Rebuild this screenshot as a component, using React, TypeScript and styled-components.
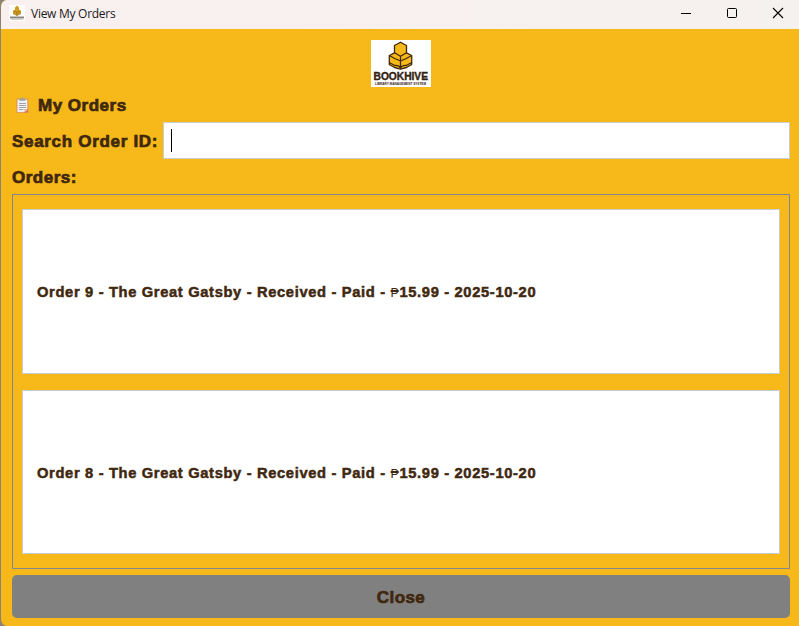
import React from "react";
import styled, { createGlobalStyle } from "styled-components";

const GlobalStyle = createGlobalStyle`
  * { box-sizing: border-box; }
  html, body { margin: 0; padding: 0; overflow: hidden; background: #8b826f; }
`;

const Window = styled.div`
  width: 799px;
  height: 626px;
  display: flex;
  flex-direction: column;
  background: #f7b919;
  border-left: 1px solid #8b826f;
  border-radius: 7px 0 0 7px;
  overflow: hidden;
  color: #40280f;
  font-family: "Liberation Sans", Arial, sans-serif;
  font-weight: 700;
`;

const TitleBar = styled.header`
  height: 29px;
  flex: none;
  display: flex;
  align-items: center;
  padding: 0 15px 3px 8px;
  background: linear-gradient(90deg, #f9f0ef, #f5f1ef);
  color: #1b1b1b;
`;

const Title = styled.span`
  margin: 1px 0 0 6px;
  font: 400 12px "Open Sans", "Noto Sans", sans-serif;
  letter-spacing: -0.27px;
  flex: 1;
`;

const Controls = styled.div`
  display: flex;
  gap: 34px;
  svg { display: block; }
`;

const Content = styled.main`
  flex: 1;
  display: flex;
  flex-direction: column;
  padding: 11px 9px 8px 11px;
`;

const LogoRow = styled.div`
  height: 47px;
  display: flex;
  justify-content: center;
  svg { display: block; overflow: visible; }
`;

const Label = styled.div<{ $spacing: number }>`
  padding-top: 2px;
  font-size: 17px;
  line-height: 20px;
  letter-spacing: ${(p) => p.$spacing}px;
  -webkit-text-stroke: 0.7px currentColor;
  white-space: pre;
`;

const HeadingRow = styled.div`
  display: flex;
  align-items: center;
  height: 20px;
  margin: 8px 0 7px;
  padding-left: 3px;
  gap: 8px;
`;

const SearchRow = styled.div`
  display: flex;
  align-items: center;
  height: 37px;
`;

const LabelCell = styled.div`
  width: 151px;
`;

const SearchBox = styled.div`
  flex: 1;
  height: 37px;
  display: flex;
  align-items: center;
  padding-left: 7px;
  background: #fff;
  border: 1px solid #ccc;
`;

const Caret = styled.span`
  width: 1px;
  height: 23px;
  background: #000;
`;

const OrdersHeading = styled.div`
  height: 21px;
  margin: 7px 0;
`;

const OrderList = styled.section`
  height: 375px;
  padding: 14px 9px;
  border: 1px solid #828790;
`;

const OrderCard = styled.article<{ $height: number }>`
  height: ${(p) => p.$height}px;
  margin-bottom: 16px;
  padding: 2px 0 0 14px;
  display: flex;
  align-items: center;
  background: #fff;
  border: 1px solid #ccc;
`;

const OrderText = styled.span`
  font-size: 14.7px;
  line-height: 18px;
  letter-spacing: 0.66px;
  -webkit-text-stroke: 0.5px currentColor;
  white-space: pre;
`;

const Peso = styled.span`
  display: inline-block;
  width: 9px;
  font-family: "Liberation Sans", sans-serif;
  font-size: 12.5px;
  font-weight: 400;
  letter-spacing: 0;
  -webkit-text-stroke: 0;
`;

const CloseButton = styled.button`
  height: 43px;
  margin-top: 6px;
  padding: 0;
  display: flex;
  align-items: center;
  justify-content: center;
  border: 0;
  border-radius: 5px;
  background: #808080;
  color: inherit;
  font-family: inherit;
  font-weight: 700;
`;

const LogoMark = () => (
  <g stroke="#40280f" strokeWidth="1.3" strokeLinejoin="round" fill="#f7b919">
    <path d="m18.300 15.500 5.400-2.700h11.600l5.400 2.700v9l-5.200 3-6 1.700-6-1.700-5.200-3z" />
    <path d="m23.500 5.500 6-3.300 6 3.300v7.300l-6 3.500-6-3.500z" />
    <path d="m18.300 15.500 5.400 3 5.800 2.500 5.800-2.500 5.400-3M29.500 16.300V29M18.300 22.500l5.400 3q4.300-.3 5.800 2.500 1.500-2.800 5.800-2.500l5.400-3" fill="none" />
  </g>
);

const Logo = () => (
  <svg width="60" height="47" viewBox="0 0 60 47">
    <rect width="60" height="47" fill="#fff" />
    <LogoMark />
    <text x="2.500" y="40" textLength="54.500" lengthAdjust="spacingAndGlyphs" fill="#33210f" stroke="#33210f" strokeWidth=".35" fontFamily="Liberation Sans" fontWeight="700" fontSize="10">BOOKHIVE</text>
    <text x="4" y="45.300" textLength="51" lengthAdjust="spacingAndGlyphs" fill="#33210f" fontFamily="Liberation Sans" fontWeight="700" fontSize="2.800">LIBRARY MANAGEMENT SYSTEM</text>
  </svg>
);

const AppIcon = () => (
  <svg width="16" height="16" viewBox="0 0 16 16">
    <rect width="16" height="16" fill="#fff" />
    <path d="M6 2.500 8 .5l2 2v2l2 1.500v2.500L8 10.500 4 8.500V6l2-1.500z" fill="#d39c1b" />
    <path d="M4.500 6 8 7.500 11.500 6M8 7.500v3M4 8.500l4 2 4-2" stroke="#8b671f" strokeWidth=".6" fill="none" />
    <path d="M1 12.500h14" stroke="#8b8781" strokeWidth="2" />
    <path d="M2 14.500h12" stroke="#d5d2ce" />
  </svg>
);

const Clipboard = () => (
  <svg width="15" height="17" viewBox="0 0 15 17">
    <rect x="1.200" y="1.500" width="12.300" height="14.500" rx="1" fill="#e59b55" />
    <path d="M2.500 2.700h9.700v12.300H2.500z" fill="#edf0f5" />
    <path d="M4.500 3.800V1.500H6Q7.300-.5 8.700 1.500h1.500v2.300z" fill="#9ca3a1" />
    <path d="M4 6.500h7M4 8.500h7M4 10.500h7M4 12.500h4" stroke="#9b9ca2" strokeWidth=".9" />
    <path d="M8.800 15v-3h3.400z" fill="#f2bd9c" />
    <path d="M9 15.500 13 11.500v4z" fill="#dc7860" />
  </svg>
);

const WindowControls = () => (
  <Controls>
    <svg width="12" height="12"><path d="M1 6.500h10" stroke="#000" /></svg>
    <svg width="12" height="12"><rect x="1.500" y="1.500" width="9" height="9" rx="1" fill="none" stroke="#000" /></svg>
    <svg width="12" height="12"><path d="m1 1 10 10M11 1 1 11" stroke="#000" strokeWidth="1.100" /></svg>
  </Controls>
);

const orders = [
  { id: 9, height: 165 },
  { id: 8, height: 164 },
];

export default function App() {
  return (
    <>
      <GlobalStyle />
      <Window>
        <TitleBar>
          <AppIcon />
          <Title>View My Orders</Title>
          <WindowControls />
        </TitleBar>
        <Content>
          <LogoRow><Logo /></LogoRow>
          <HeadingRow>
            <Clipboard />
            <Label $spacing={0.5}>My Orders</Label>
          </HeadingRow>
          <SearchRow>
            <LabelCell><Label $spacing={0.69}>Search Order ID:</Label></LabelCell>
            <SearchBox><Caret /></SearchBox>
          </SearchRow>
          <OrdersHeading><Label $spacing={0.5}>Orders:</Label></OrdersHeading>
          <OrderList>
            {orders.map((o) => (
              <OrderCard key={o.id} $height={o.height}>
                <OrderText>
                  Order {o.id} - The Great Gatsby - Received - Paid - <Peso>₱</Peso>15.99 - 2025-10-20
                </OrderText>
              </OrderCard>
            ))}
          </OrderList>
          <CloseButton><Label $spacing={0.4}>Close</Label></CloseButton>
        </Content>
      </Window>
    </>
  );
}
